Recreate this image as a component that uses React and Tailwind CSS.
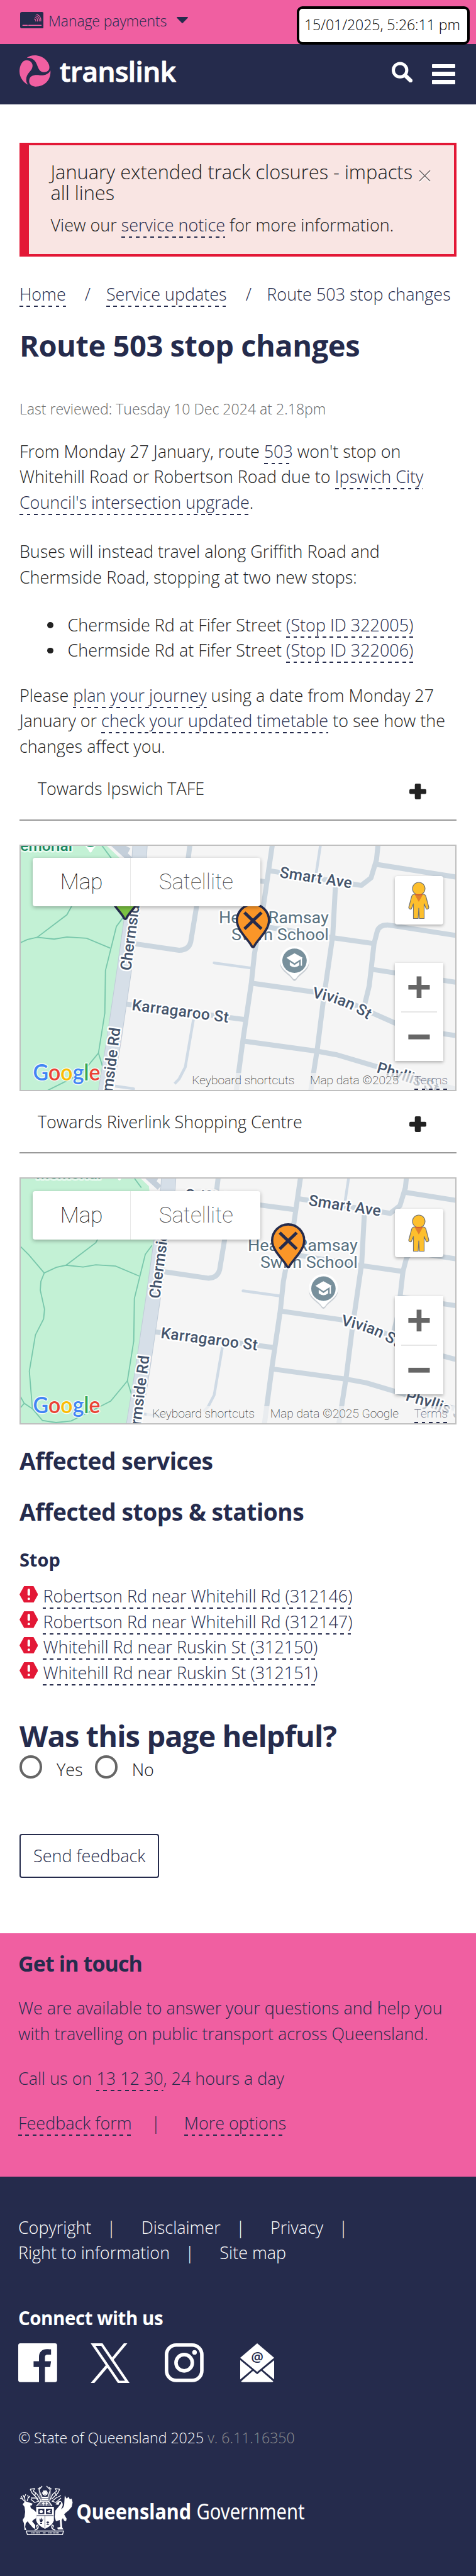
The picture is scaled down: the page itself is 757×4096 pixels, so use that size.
import React from "react";
import { clsx } from "clsx";

const NAVY = "#252b4c";

/* Inline link with a dashed rule under every line fragment */
function Link({ children, className }) {
  return (
    <a
      className={clsx(
        "pb-[2px] text-[#252b4c] bg-no-repeat bg-bottom bg-[length:100%_2px] bg-[repeating-linear-gradient(90deg,#252b4c_0px,#252b4c_5.8px,transparent_5.8px,transparent_11.55px)] [box-decoration-break:clone] [-webkit-box-decoration-break:clone]",
        className
      )}
    >
      {children}
    </a>
  );
}

function CardIcon() {
  return (
    <svg className="mt-[18.6px] h-[26.3px] w-[37.6px]" viewBox="58 27 176 123">
      <rect x="58" y="27" width="176" height="123" rx="14" fill={NAVY} />
      <g fill="none" stroke="#f05fa1" strokeWidth="5.5" strokeLinecap="round">
        <path d="M78 126H112M122 126H215" strokeWidth="7" />
        <path d="M181 45C203 52 214 72 212 95M175 56C194 62 203 78 200 95M170 67C182 71 190 82 187 96M165 79C171 82 176 88 175 96" />
      </g>
    </svg>
  );
}

function TranslinkLogo() {
  return (
    <svg className="h-[52px] w-[252px]" viewBox="0 0 252 52">
      <g transform="translate(0 1) scale(.214) translate(-54 -350)" fill="#f05fa1">
        <path d="M107 370C130 352 155 348 188 352C242 361 281 408 276 445C272 474 238 483 212 468C194 456 190 430 177 405C161 378 138 366 107 370Z" />
        <path d="M105 386C142 386 160 417 147 447C137 472 104 488 104 530C104 549 109 559 118 568C80 550 53 510 54 465C55 428 74 386 105 386Z" />
        <path d="M284 462C290 532 240 583 172 582C138 580 121 560 127 530C133 500 165 492 205 498C242 502 270 489 284 462Z" />
      </g>
      <text
        x="64"
        y="42.6"
        fontFamily="Open Sans, sans-serif"
        fontWeight="600"
        fontSize="44"
        fill="#fff"
        stroke="#fff"
        strokeWidth="1"
        strokeLinejoin="round"
        textLength="185"
        lengthAdjust="spacing"
      >
        translink
      </text>
    </svg>
  );
}

function Header() {
  return (
    <header className="relative">
      <div className="flex h-[69.5px] items-start bg-[#f05fa1] pl-[31.7px]">
        <CardIcon />
        <span className="mt-[21.3px] ml-[7.8px] text-[23px] leading-[24px] -tracking-[0.1px] text-[#252b4c]">Manage payments</span>
        <svg className="mt-[26.8px] ml-[15.5px] h-[10px] w-[18px]" viewBox="0 0 18 10">
          <path d="M1 0H17Q18.4 .4 17.6 1.6L10 9.3Q9 10.3 8 9.3L.4 1.6Q-.4 .4 1 0Z" fill={NAVY} />
        </svg>
      </div>
      <div className="flex h-[96.2px] items-start bg-[#252b4c] pl-[30.8px]">
        <div className="mt-[17.3px]">
          <TranslinkLogo />
        </div>
        <svg className="mt-[28.6px] ml-[340px] h-[33px] w-[33px]" viewBox="0 0 33 33" fill="none" stroke="#fff">
          <circle cx="13.2" cy="13.6" r="10.7" strokeWidth="5" />
          <path d="M21.5 22L29.8 30" strokeWidth="6.4" strokeLinecap="round" />
        </svg>
        <div className="mt-[32.1px] ml-[31.2px] flex flex-col gap-[6.7px]">
          <span className="h-[6.2px] w-[36.7px] rounded-[1px] bg-white" />
          <span className="h-[6.2px] w-[36.7px] rounded-[1px] bg-white" />
          <span className="h-[6.2px] w-[36.7px] rounded-[1px] bg-white" />
        </div>
      </div>
      <div className="absolute top-[9.6px] left-[471.7px] h-[61.6px] w-[275.6px] rounded-[9px] border-4 border-black bg-white pt-[13.8px] pl-[8.2px] text-[23.1px] leading-[24px] -tracking-[0.06px] whitespace-nowrap text-black">
        15/01/2025, 5:26:11 pm
      </div>
    </header>
  );
}

function Alert() {
  return (
    <section className="flex h-[181px] items-start border-4 border-l-[15.4px] border-[#e31836] bg-[#f9e5e3] pt-[26.1px] pl-[34.6px]">
      <div className="w-[578px]">
        <h2 className="w-[586px] text-[30.8px] leading-[32.6px]">January extended track closures - impacts all lines</h2>
        <p className="mt-[15px]">
          View our <Link>service notice</Link> for more information.
        </p>
      </div>
      <svg className="mt-[12.5px] ml-[7.5px] h-[20px] w-[19px]" viewBox="0 0 19 20" fill="none" strokeWidth="1.5">
        <path d="M1 3L18 20M18 3L1 20" stroke="#fff" />
        <path d="M1 1L18 18M18 1L1 18" stroke="#6b6262" />
      </svg>
    </section>
  );
}

function AccordionRow({ children }) {
  return (
    <div className="flex h-[70.4px] items-start border-b-2 border-[#999] pl-[29px]">
      <span className="w-[591px]">{children}</span>
      <svg className="mt-[11.6px] h-[25px] w-[27px]" viewBox="0 0 27 25" fill="#222">
        <rect x="8.7" y="0" width="9.6" height="25" rx="2" />
        <rect x="0" y="8.8" width="27" height="7.6" rx="2" />
      </svg>
    </div>
  );
}

function StopMarker({ x, y, fill }) {
  return (
    <g transform={`translate(${x} ${y})`}>
      <path
        d="M-1.8 -2.2C-6 -12 -25.5 -27 -25.5 -43.6A25.5 25.5 0 0 1 25.5 -43.6C25.5 -27 6 -12 1.8 -2.2Q0 0 -1.8 -2.2Z"
        fill={fill}
        stroke={NAVY}
        strokeWidth="3.6"
        strokeLinejoin="round"
      />
      <path d="M-13.5 -56L13.5 -30M13.5 -56L-13.5 -30" stroke={NAVY} strokeWidth="5" />
    </g>
  );
}

function MapDrawing({ id, dx, dy, children }) {
  const label = {
    fontFamily: "Roboto, sans-serif",
    fontWeight: 500,
    fontSize: 24.5,
    fill: "#44546c",
    stroke: "#fff",
    strokeWidth: 5,
    strokeLinejoin: "round",
    paintOrder: "stroke",
  };
  const place = { ...label, fontWeight: 400, fontSize: 25, fill: "#587180" };
  return (
    <svg className="block h-full w-full" viewBox="0 0 691.4 388.2" preserveAspectRatio="none">
      <defs>
        <path id={`${id}-vivian`} d="M463 241Q500 248 528 262Q545 271 570 288" />
        <path id={`${id}-phyllis`} d="M565 360Q605 371 632 382L690 408" />
      </defs>
      <rect width="691.4" height="388.2" fill="#f5f5f5" />
      <g transform={`translate(${dx} ${dy})`}>
        <g
          transform="translate(-32.8 -35.2) scale(.4828 .28664)"
          fill="none"
          className="[&>path]:[vector-effect:non-scaling-stroke]"
        >
          <path d="M-100 80H330L350 120L395 192L412 470L410 520L385 900L320 1560H-100Z" fill="#c3f1d5" />
          <g stroke="#78c7ab" strokeWidth="1.8" className="[&>path]:[vector-effect:non-scaling-stroke]">
            <path d="M-28 527L-1 572L50 673L90 642L122 630L178 640L220 628L285 635L363 690" />
            <path d="M122 630L220 505L238 450L270 380" />
            <path d="M50 673L39 720L37 768L51 874L48 928L21 1017L1 1218L11 1426L44 1491L89 1503L139 1494L234 1414L269 1384L324 1272L339 1355" />
            <path d="M-28 1360L-16 1396L11 1426M-28 1420L-16 1396" />
            <path d="M405 520L383 570L347 815L345 1050L324 1272" />
            <path d="M325 90L335 120L370 200" />
          </g>
          <path d="M365 100L430 200M385 115L425 150" stroke="#c4cfda" strokeWidth="9" />
          <g stroke="#cfdae5" strokeWidth="4.4" className="[&>path]:[vector-effect:non-scaling-stroke]">
            <path d="M1058 90L1040 290" />
            <path d="M637 1085L610 1350L590 1415L575 1442" />
            <path d="M705 772L825 800" strokeLinecap="round" />
            <path d="M365 1452L440 1470" strokeLinecap="round" />
          </g>
          <g
            stroke="#cbd6df"
            strokeWidth="8"
            strokeLinejoin="round"
            className="[&>path]:[vector-effect:non-scaling-stroke]"
          >
            <path d="M900 80L868 450L838 720L828 880L800 1200L774 1530" />
            <path d="M1105 340L1096 620L1065 980L1045 1250L1018 1540" />
            <path d="M1248 70L1240 200L1222 300L1190 342L1160 334L885 260" />
            <path d="M1238 225L1600 322" />
            <path d="M870 570L1095 632L1232 665" />
            <path d="M1200 1010L1216 900L1232 665L1242 600Q1248 560 1280 562L1600 645" />
            <path d="M1226 808L1600 905" />
            <path d="M832 885L1040 935L1150 990L1220 1045L1300 1105L1400 1150L1600 1200" />
            <path d="M415 1000L803 1086" />
            <path d="M800 1205L1045 1262L1110 1282L1240 1347L1600 1520" />
            <path d="M650 430L628 655Q622 700 590 702L440 665" />
            <path d="M628 80L615 255L645 270L877 322" />
          </g>
          <path d="M463 60L458 200L438 460L410 800L375 1200L340 1560" stroke="#c0ccd8" strokeWidth="24" />
          <path d="M463 60L458 200L438 460L410 800L375 1200L340 1560" stroke="#d6dfe8" strokeWidth="22" />
        </g>
        <text {...label} x="82" y="8.4" textAnchor="end" fill="#1b8760" stroke="#e8fbf0">Memorial</text>
        <path d="M96 -14A15 15 0 0 1 126 -14C126 -4 116 2 113 9Q111 12 109 9C106 2 96 -4 96 -14Z" fill="#fff" />
        <circle cx="111" cy="-9" r="11" fill="#2fa37a" />
        <text {...label} transform="translate(214 41) rotate(6)">Griffith Rd</text>
        <text {...label} transform="translate(411 50) rotate(8.6)" textLength="116">Smart Ave</text>
        <text {...label} transform="translate(176 261) rotate(7.4)" textLength="155">Karragaroo St</text>
        <text {...label} transform="translate(175 199) rotate(-82.5)">Chermside Rd</text>
        <text {...label} transform="translate(158.5 290) rotate(-83)" textAnchor="end">Chermside Rd</text>
        <text {...label}>
          <textPath href={`#${id}-vivian`}>Vivian St</textPath>
        </text>
        <text {...label}>
          <textPath href={`#${id}-phyllis`}>Phyllis St</textPath>
        </text>
        <text {...place} x="490" y="123" textAnchor="end" textLength="175" lengthAdjust="spacingAndGlyphs">Heath Ramsay</text>
        <text {...place} x="490" y="149.7" textAnchor="end" textLength="155" lengthAdjust="spacingAndGlyphs">Swim School</text>
        <g transform="translate(435.5 182.6)">
          <path d="M-23.2 1A23.2 23.2 0 0 1 23.2 1C23.2 15 8 20 3 28.5Q0 32.5 -3 28.5C-8 20 -23.2 15 -23.2 1Z" fill="#9aa5b1" opacity=".5" transform="translate(0 1.6)" />
          <path d="M-23.2 0A23.2 23.2 0 0 1 23.2 0C23.2 14 8 19 3 27.5Q0 31.5 -3 27.5C-8 19 -23.2 14 -23.2 0Z" fill="#fff" />
          <circle r="19.4" fill="#78909c" />
          <path d="M-12.8 -4.5L0 -11.8L13.2 -4.5L0 4Z" fill="#fff" />
          <path d="M-7.5 1.8L0 7L7.5 1.8V7.5Q0 13.5 -7.5 7.5Z" fill="#fff" />
          <path d="M10.9 -4V8" stroke="#fff" strokeWidth="2" />
        </g>
      </g>
      {children}
      <text
        x="19.5"
        y="373.3"
        fontFamily="Lato, sans-serif"
        fontWeight="600"
        fontSize="36.5"
        textLength="107"
        lengthAdjust="spacingAndGlyphs"
        stroke="#fff"
        strokeOpacity=".8"
        strokeWidth="3"
        strokeLinejoin="round"
        paintOrder="stroke"
      >
        <tspan fill="#4285f4">G</tspan>
        <tspan fill="#ea4335">o</tspan>
        <tspan fill="#fbbc04">o</tspan>
        <tspan fill="#4285f4">g</tspan>
        <tspan fill="#34a853">l</tspan>
        <tspan fill="#ea4335">e</tspan>
      </text>
    </svg>
  );
}

function MapControls({ credit }) {
  return (
    <div className="font-['Roboto']">
      <div className="absolute top-[19.3px] left-[19.3px] flex h-[77px] rounded-[4px] bg-white text-[35px] leading-[77px] font-thin shadow-[0_2px_6px_rgba(0,0,0,0.3)]">
        <span className="w-[155px] pl-[43.5px] text-black">Map</span>
        <span className="w-[206.4px] border-l border-[#e8e8e8] pl-[44.5px] text-[#444]">Satellite</span>
      </div>
      <div className="absolute top-[47.6px] right-[19.3px] flex h-[77px] w-[77px] justify-center rounded-[4px] bg-white pt-[9px] shadow-[0_2px_5px_rgba(0,0,0,0.3)]">
        <svg className="h-[60px] w-[34px]" viewBox="0 0 34 60">
          <path
            d="M10 20H24Q27.5 20 28.5 24L33 41Q32.5 44 29 43.5L25.5 35V58.5H18L17 42L16 58.5H8.5V35L5 43.5Q1.5 44 1 41L5.500 24Q6.500 20 10 20Z"
            fill="#fdbf2d"
            stroke="#727272"
            strokeWidth="1.2"
            strokeLinejoin="round"
          />
          <path d="M10.5 20.5H23.5L17 32Z" fill="#e27f2d" />
          <ellipse cx="17" cy="11" rx="10" ry="10" fill="#fdbf2d" stroke="#727272" strokeWidth="1.2" />
          <path d="M11.5 20.5H22.5" stroke="#d9592b" strokeWidth="1.3" />
        </svg>
      </div>
      <div className="absolute top-[186.4px] right-[19.3px] flex h-[156px] w-[77px] flex-col items-center bg-white shadow-[0_2px_5px_rgba(0,0,0,0.3)]">
        <svg className="h-[77px] w-[77px]" viewBox="0 0 77 77" fill="#666">
          <path d="M34.6 21.4H42.3V34.9H55.5V42.6H42.3V56.1H34.6V42.6H21.4V34.9H34.6Z" />
        </svg>
        <span className="h-[2px] w-[57.5px] bg-[#e6e6e6]" />
        <svg className="h-[77px] w-[77px]" viewBox="0 0 77 77" fill="#666">
          <rect x="21.4" y="34.9" width="34.1" height="7.7" />
        </svg>
      </div>
      <div className="absolute right-0 bottom-0 flex h-[27px] gap-[24.5px] bg-[#f5f5f5]/70 pr-[12px] pl-[9px] text-[19.26px] leading-[24px] font-thin whitespace-nowrap text-black">
        <span>Keyboard shortcuts</span>
        <span>{credit}</span>
        <Link className="h-[27px] leading-[24px]">Terms</Link>
      </div>
    </div>
  );
}

function MapPanel({ id, dx, dy, credit, children }) {
  return (
    <div className="relative mt-[38.4px] h-[392.2px] overflow-hidden border-2 border-[#bfbfbf]">
      <MapDrawing id={id} dx={dx} dy={dy}>
        {children}
      </MapDrawing>
      <MapControls credit={credit} />
    </div>
  );
}

function AlertHex() {
  return (
    <svg className="mt-[3.3px] h-[26.4px] w-[29.6px] shrink-0" viewBox="0 0 29.6 26.4">
      <path d="M7.3 0H22.3L29.6 13.2L22.3 26.4H7.3L0 13.2Z" fill="#e31836" />
      <path d="M14.8 6V13.2" stroke="#fff" strokeWidth="4" strokeLinecap="round" />
      <circle cx="14.8" cy="20.3" r="2" fill="#fff" />
    </svg>
  );
}

const STOPS = [
  "Robertson Rd near Whitehill Rd (312146)",
  "Robertson Rd near Whitehill Rd (312147)",
  "Whitehill Rd near Ruskin St (312150)",
  "Whitehill Rd near Ruskin St (312151)",
];

function Radio({ label }) {
  return (
    <label className="flex items-start">
      <span className="h-[36.6px] w-[36.6px] rounded-full border-4 border-[#666]" />
      <span className="mt-[3px] ml-[22.5px]">{label}</span>
    </label>
  );
}

function Contact() {
  return (
    <section className="h-[387px] bg-[#f05fa1] pl-[29px] text-[#252b4c]">
      <h2 className="pt-[27.5px] text-[34px] leading-[40px] font-bold -tracking-[0.9px]">Get in touch</h2>
      <p className="mt-[31.4px] w-[700px]">
        We are available to answer your questions and help you with travelling on public transport across Queensland.
      </p>
      <p className="mt-[31px]">
        Call us on <Link>13 12 30</Link>, 24 hours a day
      </p>
      <p className="mt-[30.9px]">
        <Link>Feedback form</Link>
        <span className="mr-[37.5px] ml-[31px]">|</span>
        <Link>More options</Link>
      </p>
    </section>
  );
}

function NavRow({ items, trailing }) {
  return (
    <div className="flex">
      {items.map((item, i) => (
        <span key={item} className="flex">
          <span>{item}</span>
          {(trailing || i < items.length - 1) && <span className="mr-[40.2px] ml-[24.5px]">|</span>}
        </span>
      ))}
    </div>
  );
}

function SocialIcons() {
  return (
    <div className="mt-[19.6px] flex h-[64px] items-start">
      <svg className="mt-[.5px] h-[61.7px] w-[61.8px]" viewBox="0 0 61.8 61.7">
        <rect width="61.8" height="61.7" rx="3.4" fill="#fff" />
        <path d="M33 62V37.800H24.400V28.400H33V21.500C33 13.500 38.300 9.200 45.500 9.200C48.500 9.200 51 9.400 52.200 9.600V18H47C43.500 18 42.500 19.800 42.500 22.200V28.400H52.200L50.800 37.800H42.500V62Z" fill={NAVY} />
      </svg>
      <svg className="ml-[53.6px] h-[63.4px] w-[62.7px]" viewBox="0 0 62.7 63.4">
        <path d="M53 0H58.600L36.500 26.500L33.500 23.400ZM24.500 34.500L28 37.600L5.800 63.400H0Z" fill="#fff" />
        <path d="M4 2H18L58.500 61.400H44.700Z" fill="none" stroke="#fff" strokeWidth="4" />
      </svg>
      <svg className="mt-[.5px] ml-[55.5px] h-[61.8px] w-[61.8px]" viewBox="0 0 61.8 61.8" fill="none" stroke="#fff">
        <rect x="2.8" y="2.8" width="56.2" height="56.2" rx="15.5" strokeWidth="5.6" />
        <circle cx="30.9" cy="30.9" r="13" strokeWidth="5.6" />
        <circle cx="47.4" cy="14.4" r="3.7" fill="#fff" stroke="none" />
      </svg>
      <svg className="mt-[.5px] ml-[57.5px] h-[61.8px] w-[54.1px]" viewBox="0 0 54.1 61.8">
        <path d="M27 0L54.100 23L27 45.500L0 23Z" fill="#fff" />
        <path d="M0 26.800L18.500 42L0 57.500ZM54.100 26.800L35.600 42L54.100 57.500Z" fill="#fff" />
        <path d="M1.500 60.500L20.500 43.700L27 49.200L33.500 43.700L52.600 60.500Q52 61.800 50 61.800H4Q2 61.800 1.500 60.500Z" fill="#fff" />
        <text x="27" y="30.5" textAnchor="middle" fontFamily="Open Sans, sans-serif" fontWeight="600" fontSize="22" fill={NAVY}>@</text>
      </svg>
    </div>
  );
}

function CoatOfArms() {
  return (
    <svg className="h-[80px] w-[457px]" viewBox="0 0 457 80">
      <g fill="#fff">
        <path d="M5 30L9 25L15 27L21 29L19 32L17 32L18 36Q24 39 27 43L26.500 52Q22 54 20 57L25 63L25 69L22 68L15 60L13 57L10 60L9 66L11 71H8L7 60L5 55L8 50L9 42L8 34Z" />
        <path d="M72 16L75 21L78 18L80 22L83 21L84.500 27L83 34L78 40L74 43L71 46L75 53L74 57L71 56L69 52L67 55L68 67L70 70L61 70L60 67L65 66L64 55L58 57L56 50L57 40L62 34L66 29Q67 26 64 26L62 31L57 30L61 26Q64 23 67 26Q70 29 68 34L66 38Q70 36 71 31Z" />
        <path d="M30.500 8L35 12L37 20L45 20L47 11L50 8L51 20L48 25L52 33H29L33 24L31 20Z" opacity=".35" />
        <path d="M26.500 34H54.700V56Q52 64 40.600 69Q29 64 26.500 56Z" />
      </g>
      <g fill="none" stroke="#fff" strokeWidth="1.3">
        <path d="M9 26L5 22L1 20M5 22L3 17M9 25L8 18L10 14M8 20L5.500 15M12 25L14 19L13 15M14 20L16.500 17" />
        <path d="M36 1L31 7L33 13L36 19M43 1L49 7L47 13L45 19M29 6L33 3M51 6L47 3" />
        <path d="M17 6L24 5L22 9L28 14L34 24M17 6L20 12L26 18L30 22M64 6L57 5L59 9L53 14L48 24M64 6L61 12L55 18L51 22" />
        <path d="M18 20L26 20L31 25L24 27L18 22M66 16L58 20L52 25L58 27L66 20M26 11L24 17M56 11L59 17M27 33L34 25H46L52 33" />
        <path d="M40.600 7V17M36 12H45M37.500 8.500L43.800 15M43.800 8.500L37.500 15M35 19H46M35 22H46" strokeWidth="1.8" />
        <path d="M38 26V32M43 26V32M36 28.500H40M41.500 28.500H45" />
        <path d="M24 71Q32 69 29 63Q26 63 28 67M57 71Q49 69 52 63Q55 63 53 67" strokeWidth="1.6" />
        <path d="M10.800 72.500H70L68.500 78H12.500Z" />
        <path d="M19 75.300H33M37 75.300H42M46 75.300H63" strokeDasharray="1.5 .8" strokeWidth="2.2" opacity=".8" />
      </g>
      <g fill={NAVY}>
        <path d="M30 37H39.500V45.500H30ZM42 37H51.800V45.500H42Z" />
        <path d="M40.200 48.500H41V67H40.200ZM27.500 47.500H54V48.500H27.500Z" />
        <path d="M31 52L33 58H36L38 52L36 55L34.500 51L33 55ZM33 59.500H36V61H33Z" />
        <path d="M43 58L47 62M47 58L43 62M45 57L45 63" stroke={NAVY} strokeWidth="1.2" />
      </g>
      <g fill="#fff">
        <circle cx="34.5" cy="41.5" r="2.6" />
        <path d="M43.500 42Q47 38 50 39L48 41L50 44L46 43Z" />
      </g>
      <g fill="#fff" fontFamily="Noto Sans, sans-serif">
        <text x="90.5" y="53.7" fontWeight="700" fontSize="34" textLength="182.5" lengthAdjust="spacingAndGlyphs">Queensland</text>
        <text x="281.5" y="53.7" fontWeight="400" fontSize="34" textLength="172" lengthAdjust="spacingAndGlyphs">Government</text>
      </g>
    </svg>
  );
}

function Footer() {
  return (
    <footer className="h-[634.6px] bg-[#252b4c] pl-[28.9px] text-white">
      <nav className="pt-[60.5px]">
        <NavRow items={["Copyright", "Disclaimer", "Privacy"]} trailing />
        <NavRow items={["Right to information", "Site map"]} />
      </nav>
      <h2 className="mt-[63.6px] text-[29.5px] leading-[40px] font-bold -tracking-[0.45px]">Connect with us</h2>
      <SocialIcons />
      <p className="mt-[74.5px] text-[23.1px] leading-[24px]">
        © State of Queensland 2025 <span className="text-[#8f8f8f]">v. 6.11.16350</span>
      </p>
      <div className="mt-[63.5px] ml-[1.9px]">
        <CoatOfArms />
      </div>
    </footer>
  );
}

export default function App() {
  return (
    <div className="h-[4096px] w-[757px] overflow-hidden bg-white font-['Open_Sans',sans-serif] text-[26.96px] leading-[40.44px] font-light text-[#222]">
      <Header />
      <main className="h-[2908.7px] px-[30.9px] pt-[61.6px]">
        <Alert />
        <nav className="mt-[39.7px] flex whitespace-nowrap text-[#252b4c]">
          <span><Link>Home</Link></span>
          <span className="mr-[25px] ml-[30px]">/</span>
          <span><Link>Service updates</Link></span>
          <span className="mr-[24.5px] ml-[30px]">/</span>
          <span>Route 503 stop changes</span>
        </nav>
        <h1 className="mt-[34.7px] text-[47px] leading-[52px] font-bold -tracking-[0.45px] text-[#252b4c]">Route 503 stop changes</h1>
        <p className="mt-[58.4px] text-[23.1px] leading-[34.66px] text-[#666]">Last reviewed: Tuesday 10 Dec 2024 at 2.18pm</p>
        <p className="mt-[29.8px]">
          From Monday 27 January, route <Link>503</Link> won't stop on Whitehill Road or Robertson Road due to{" "}
          <Link>Ipswich City Council's intersection upgrade</Link>.
        </p>
        <p className="mt-[38.1px]">
          Buses will instead travel along Griffith Road and
          <br />
          Chermside Road, stopping at two new stops:
        </p>
        <ul className="mt-[35.8px]">
          {["322005", "322006"].map((stop) => (
            <li key={stop} className="flex items-start pl-[44.5px]">
              <span className="mt-[15.2px] mr-[22.7px] h-[9.5px] w-[9.5px] rounded-full bg-[#222]" />
              <span>
                Chermside Rd at Fifer Street <Link>(Stop ID {stop})</Link>
              </span>
            </li>
          ))}
        </ul>
        <p className="mt-[31.1px]">
          Please <Link>plan your journey</Link> using a date from Monday 27
          <br />
          January or <Link>check your updated timetable</Link> to see how the
          <br />
          changes affect you.
        </p>
        <div className="mt-[26.9px]">
          <AccordionRow>Towards Ipswich TAFE</AccordionRow>
        </div>
        <MapPanel id="tafe" dx={0} dy={0} credit="Map data ©2025">
          <StopMarker x={166.2} y={117.3} fill="#7ac142" />
          <StopMarker x={369.4} y={162} fill="#fa9628" />
        </MapPanel>
        <div className="mt-[28.4px]">
          <AccordionRow>Towards Riverlink Shopping Centre</AccordionRow>
        </div>
        <MapPanel id="riverlink" dx={46} dy={-7.6} credit="Map data ©2025 Google">
          <StopMarker x={425.4} y={142} fill="#fa9628" />
        </MapPanel>
        <div className="font-bold text-[#252b4c]">
          <h2 className="mt-[38.4px] text-[37.1px] leading-[40px] -tracking-[0.45px]">Affected services</h2>
          <h2 className="mt-[41.1px] text-[37.1px] leading-[40px] -tracking-[0.42px]">Affected stops &amp; stations</h2>
          <h3 className="mt-[39.6px] text-[29px] leading-[32px]">Stop</h3>
        </div>
        <ul className="mt-[22.9px]">
          {STOPS.map((stop) => (
            <li key={stop} className="flex h-[40.44px] items-start gap-[8px]">
              <AlertHex />
              <span><Link>{stop}</Link></span>
            </li>
          ))}
        </ul>
        <h2 className="mt-[54.1px] text-[47px] leading-[52px] font-bold -tracking-[0.9px] text-[#252b4c]">Was this page helpful?</h2>
        <div className="mt-[4.7px] flex h-[42.7px] gap-[19px]">
          <Radio label="Yes" />
          <Radio label="No" />
        </div>
        <button className="mt-[82.6px] block h-[69.3px] w-[222.6px] rounded-[4px] border-2 border-[#252b4c] pt-px text-center text-[#252b4c]">
          Send feedback
        </button>
      </main>
      <Contact />
      <Footer />
    </div>
  );
}
